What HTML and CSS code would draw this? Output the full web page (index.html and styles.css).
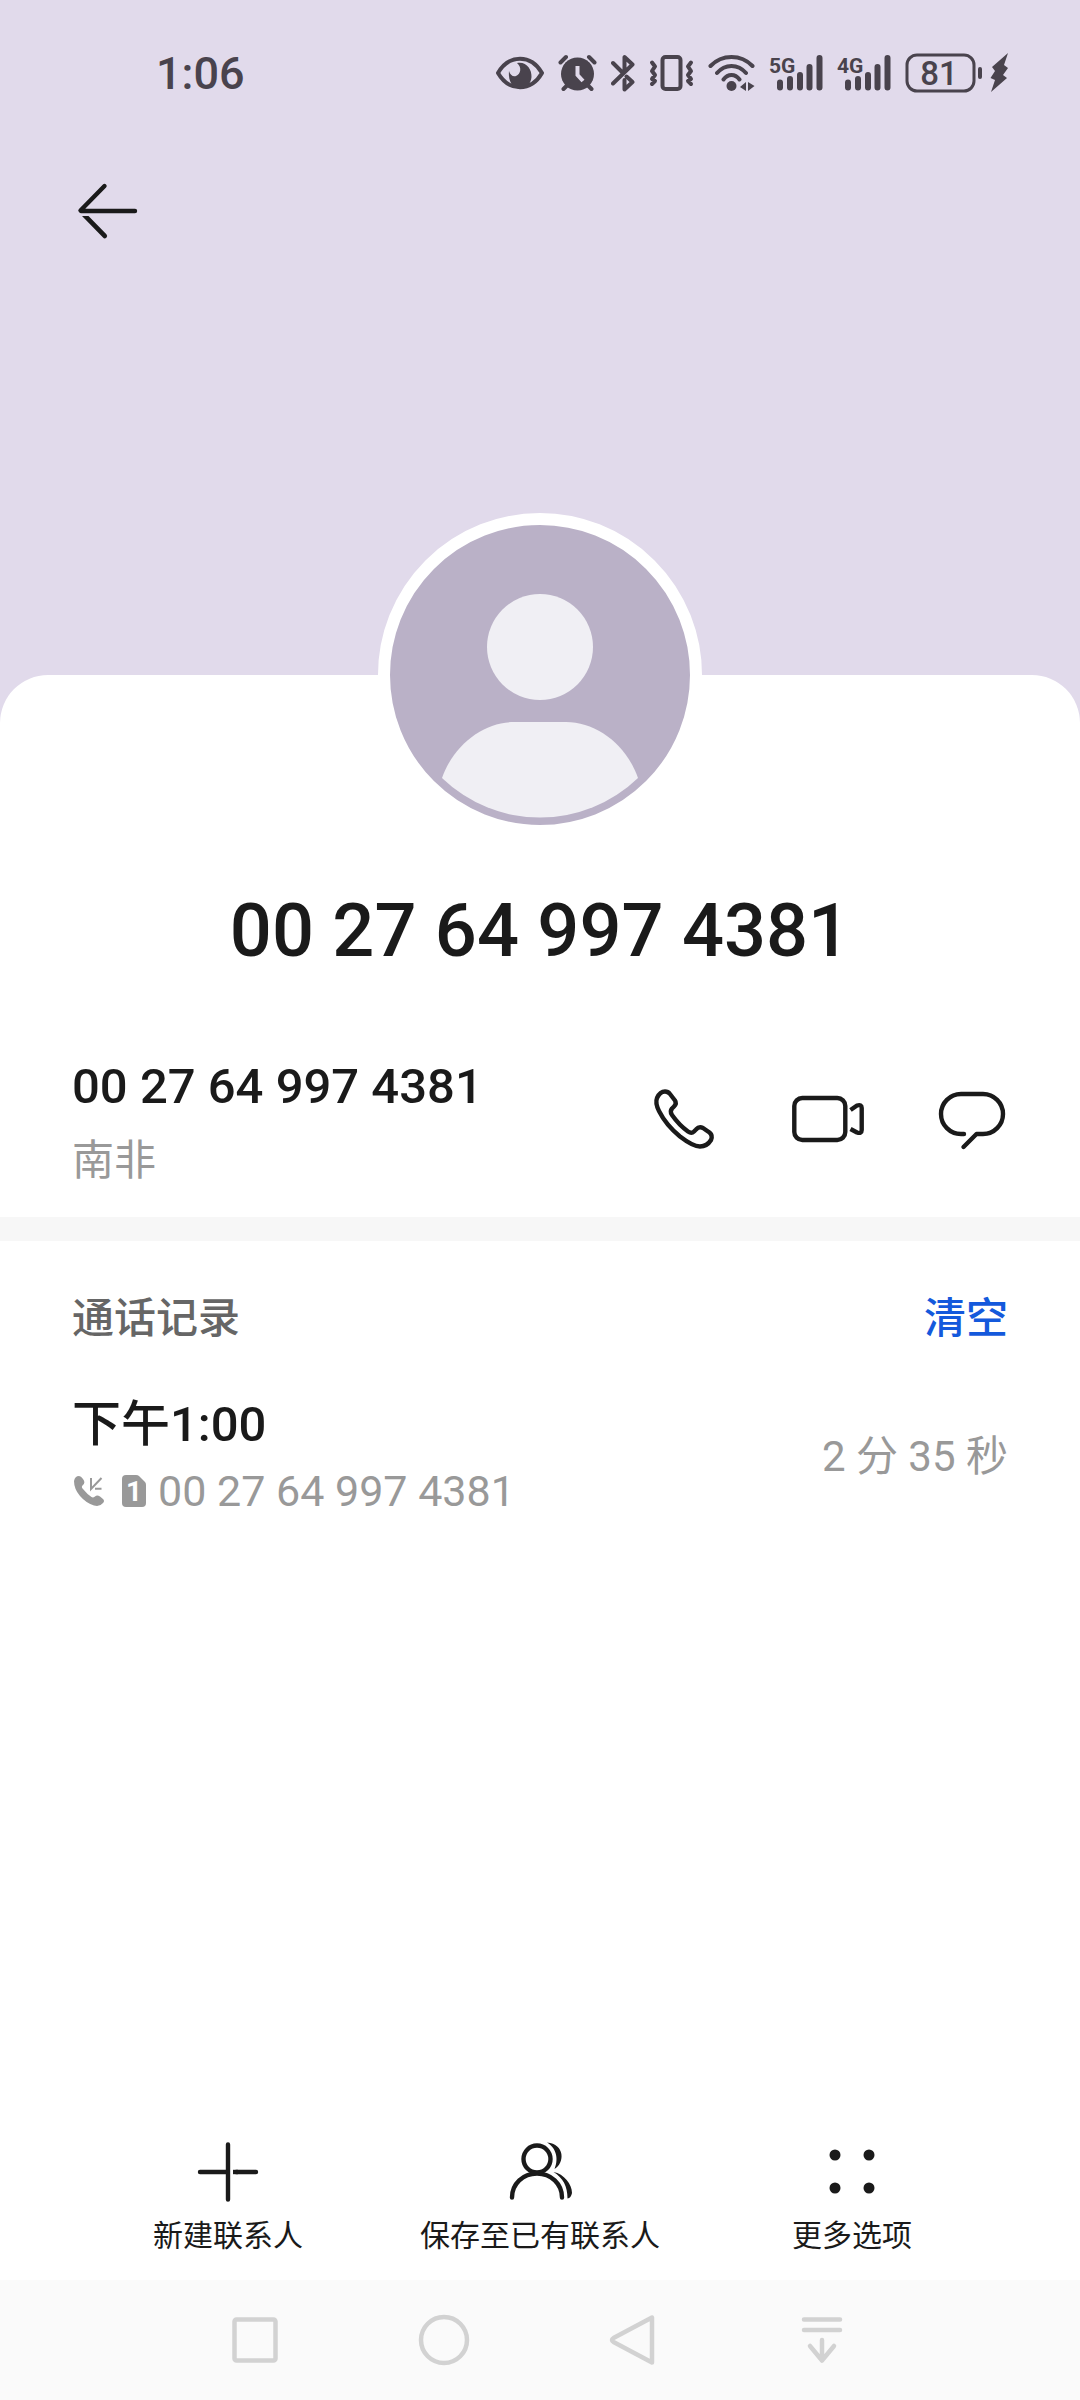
FILE: index.html
```html
<!DOCTYPE html>
<html lang="zh-CN">
<head>
    <meta charset="UTF-8">
    <meta name="viewport" content="width=device-width, initial-scale=1.0">
    <title>联系人详情</title>
    <link rel="stylesheet" href="styles.css">
</head>
<body>
    <header class="hero">
        <div class="status-bar">
            <span class="clock">1:06</span>
            <div class="status-icons">
                <!-- eye comfort -->
                <svg width="48" height="40" viewBox="0 0 48 40">
                    <path class="status-line" d="M2 20C13 1 35 1 46 20C35 39 13 39 2 20Z"/>
                    <path class="status-fill" d="M21 10C30 8 36 16 35.5 24C35 31 30 35.5 24 35.5C17 35.5 12 29 13 18C14 22 17 24 20 23C25 21 26 14 21 10Z"/>
                </svg>
                <!-- alarm -->
                <svg width="39" height="40" viewBox="0 0 39 40">
                    <circle class="status-fill" cx="19.5" cy="21" r="16.5"/>
                    <path class="status-line" d="M2.5 9.5L8 4M31 4L36.5 9.5M5.5 36L10 31.5M33.5 36L29 31.5"/>
                    <path class="status-cut" d="M19.5 13V22L25 28"/>
                </svg>
                <!-- bluetooth -->
                <svg width="24" height="40" viewBox="0 0 24 40">
                    <path class="status-line" d="M2 10L11 19M2 30.5L21.5 11.5L13.5 4V18M13.5 27V36.5L21.5 29L15.5 23.5"/>
                </svg>
                <!-- vibrate -->
                <svg width="45" height="40" viewBox="0 0 45 40">
                    <rect class="status-line" x="13.5" y="4" width="18" height="32" rx="3"/>
                    <path class="status-line" d="M3 9.5L6 13.5L3 18L6 22L3 26L6 28L3 31M42 9.5L39 13.5L42 18L39 22L42 26L39 28L42 31"/>
                </svg>
                <!-- wifi -->
                <svg width="47" height="40" viewBox="0 0 47 40">
                    <path class="status-line" d="M2.5 13C14 1 33 1 44.5 13M9 20C17 10.5 30 10.5 38 20M15.5 26.5C20 20.5 27 20.5 31.5 26.5"/>
                    <circle class="status-fill" cx="23.5" cy="33" r="5"/>
                    <path class="status-fill" d="M32 34L38 29V38ZM40 29L46.5 33L40 38Z"/>
                </svg>
                <!-- mobile signal -->
                <svg width="54" height="40" viewBox="0 0 54 40">
                    <path class="signal" d="M11 29.5V34.5M21 26V34.5M31 22V34.5M40.5 14V34.5M50.5 5V34.5"/>
                    <text class="net" x="0" y="20">5G</text>
                </svg>
                <svg width="54" height="40" viewBox="0 0 54 40">
                    <path class="signal" d="M11 29.5V34.5M21 26V34.5M31 22V34.5M40.5 14V34.5M50.5 5V34.5"/>
                    <text class="net" x="0" y="20">4G</text>
                </svg>
                <!-- battery -->
                <svg width="103" height="40" viewBox="0 0 103 40">
                    <rect class="battery" x="2" y="2" width="67" height="36" rx="10"/>
                    <rect class="status-fill" x="73" y="14" width="4" height="12" rx="2"/>
                    <text class="level" x="34" y="32">81</text>
                    <path class="status-fill" d="M103 0L87 14L90 18L85.5 25L90 27L86 39L102 25L98 22L103 15L99 12Z"/>
                </svg>
            </div>
        </div>
        <button class="icon-button back" aria-label="返回">
            <svg width="72" height="72" viewBox="0 0 72 72">
                <path class="line" d="M32.5 11L8.5 35.5L9 36H63"/>
                <path class="solid" d="M10 41H16.5L34.4 59.3A2.3 2.3 0 0 1 31 62.6Z"/>
            </svg>
        </button>
    </header>

    <main class="card">
        <svg class="avatar" viewBox="0 0 300 300">
            <circle cx="150" cy="122" r="53"/>
            <path d="M52 253C64 219 94 197 124 197H176C206 197 236 219 248 253A141 141 0 0 1 52 253Z"/>
        </svg>
        <h1 class="name">00 27 64 997 4381</h1>

        <section class="phone-row">
            <div>
                <div class="phone">00 27 64 997 4381</div>
                <div class="region">南非</div>
            </div>
            <div class="phone-actions">
                <button class="icon-button" aria-label="拨打电话">
                    <svg width="72" height="72" viewBox="0 0 72 72">
                        <path class="line" d="M17 8.5Q20 8.5 22 11L27 17.5Q29 20.5 26 23.5L24 25.5Q21.5 28.5 24 32Q31 42 40 48.5Q43.5 51 46 48.5L48 46.5Q51 43 55 45L61.5 49.5Q65 52.5 63 57Q59 63.5 52 63.5Q45 63.5 32 53.5Q18 42 11 28Q7 20 9 15Q12 8.5 17 8.5Z"/>
                    </svg>
                </button>
                <button class="icon-button" aria-label="视频通话">
                    <svg width="72" height="72" viewBox="0 0 72 72">
                        <rect class="line" x="2.3" y="15" width="51" height="42" rx="8"/>
                        <path class="line butt" d="M58.5 27L65 22.5Q69.7 21 69.7 25V47Q69.7 51 65 49.5L58.5 46"/>
                    </svg>
                </button>
                <button class="icon-button" aria-label="发送信息">
                    <svg width="72" height="72" viewBox="0 0 72 72">
                        <path class="line" d="M28 51H25A20 20 0 0 1 25 11H47A20 20 0 0 1 47 51H40.5L27.5 64"/>
                    </svg>
                </button>
            </div>
        </section>

        <section class="log">
            <div class="log-head">
                <h2 class="log-title">通话记录</h2>
                <button class="clear">清空</button>
            </div>
            <div class="log-item">
                <div>
                    <div class="time">下午1:00</div>
                    <div class="log-number">
                        <svg width="30" height="36" viewBox="0 0 30 36">
                            <path class="muted" d="M0 8Q1 3 5 3Q7 3 9 6Q12 10 8.5 12.5Q7 14 9 16Q13 21 17.5 24Q19 25 21 23.5Q23 21.5 26 23.5L29 26Q31 28 29 30Q26 34 20 32.5Q12 30 6 23Q0 16 0 8Z"/>
                            <path class="muted-line" d="M17 5V16L27.5 5M21 15.7H27.5"/>
                        </svg>
                        <svg width="24" height="32" viewBox="0 0 24 32">
                            <path class="muted" d="M4 0H14Q16 0 17 1L23 7Q24 8 24 10V28Q24 32 20 32H4Q0 32 0 28V4Q0 0 4 0Z"/>
                            <text class="sim" x="12" y="26">1</text>
                        </svg>
                        <span>00 27 64 997 4381</span>
                    </div>
                </div>
                <div class="duration">2 分 35 秒</div>
            </div>
        </section>
    </main>

    <div class="actions">
        <button class="action">
            <svg width="72" height="72" viewBox="0 0 72 72">
                <path class="line" d="M36 8.5V63.5M8 36H36M44 36H64"/>
                <path class="line butt" d="M41 36H46"/>
            </svg>
            新建联系人
        </button>
        <button class="action">
            <svg width="72" height="72" viewBox="0 0 72 72">
                <circle class="line" cx="33" cy="23" r="13.5"/>
                <path class="line" d="M8 61.5C8 48 19 37.5 33 37.5S58 48 58 61.5"/>
                <path class="solid" d="M43 6.5C61 8 61 27 50.5 33C54 25 54 13 43 6.5ZM49.5 36C60 38 68 48 68 57Q67 62 63.5 62.5C63.5 50 59 42 49.5 36Z"/>
            </svg>
            保存至已有联系人
        </button>
        <button class="action">
            <svg width="72" height="72" viewBox="0 0 72 72">
                <g class="solid">
                    <circle cx="19" cy="19" r="5.5"/>
                    <circle cx="53" cy="19" r="5.5"/>
                    <circle cx="19" cy="52" r="5.5"/>
                    <circle cx="53" cy="52" r="5.5"/>
                </g>
            </svg>
            更多选项
        </button>
    </div>

    <nav class="nav-bar">
        <button class="icon-button" aria-label="最近任务">
            <svg width="60" height="60" viewBox="0 0 60 60"><rect x="9.5" y="9.5" width="41" height="41" rx="2"/></svg>
        </button>
        <button class="icon-button" aria-label="主页">
            <svg width="60" height="60" viewBox="0 0 60 60"><circle cx="30" cy="30" r="23"/></svg>
        </button>
        <button class="icon-button" aria-label="返回上一页">
            <svg width="60" height="60" viewBox="0 0 60 60"><path d="M49 7.5V52.5L10.5 32Q7.5 30 10.5 28Z"/></svg>
        </button>
        <button class="icon-button" aria-label="通知栏">
            <svg width="60" height="60" viewBox="0 0 60 60"><path d="M12 9.5H48M12 20H48M30 30V50M18 36L30 50.5L42 36"/></svg>
        </button>
    </nav>
</body>
</html>
```
FILE: styles.css
```css
* {
    box-sizing: border-box;
}
body {
    margin: 0;
    min-height: 100vh;
    display: flex;
    flex-direction: column;
    background-color: #e1daeb;
    color: #1a1a1a;
    font-family: Roboto, "Noto Sans CJK SC", sans-serif;
}
button {
    border: 0;
    padding: 0;
    background: none;
    color: inherit;
    font-family: inherit;
    cursor: pointer;
}
svg {
    display: block;
    flex: none;
}
h1, h2 {
    margin: 0;
}

/* header */
.hero {
    height: 675px;
    padding: 0 72px;
}
.status-bar {
    height: 146px;
    padding-left: 84px;
    display: flex;
    align-items: center;
    justify-content: space-between;
    color: #49434d;
}
.clock {
    font-size: 45px;
    font-weight: 500;
}
.status-icons {
    display: flex;
    gap: 14px;
}
.status-fill,
.net,
.level {
    fill: #49434d;
}
.status-line,
.signal,
.battery {
    fill: none;
    stroke: #49434d;
    stroke-width: 4;
    stroke-linecap: round;
    stroke-linejoin: round;
}
.status-cut {
    fill: none;
    stroke: #e1daeb;
    stroke-width: 4;
}
.signal {
    stroke-width: 6;
}
.battery {
    stroke-width: 3;
}
.net {
    font-size: 21px;
    font-weight: 700;
}
.level {
    font-size: 33px;
    font-weight: 500;
    text-anchor: middle;
}
.icon-button {
    display: block;
}
.back {
    margin-top: 29px;
}
.line {
    fill: none;
    stroke: #1a1a1a;
    stroke-width: 4.4;
    stroke-linecap: round;
    stroke-linejoin: round;
}
.butt {
    stroke-linecap: butt;
}
.solid {
    fill: #1a1a1a;
}

/* contact card */
.card {
    flex: 1;
    background-color: #fff;
    border-radius: 48px 48px 0 0;
}
.avatar {
    width: 324px;
    height: 324px;
    margin: -162px auto 0;
    border: 12px solid #fff;
    border-radius: 50%;
    background-color: #bab1c7;
    fill: #f0eff4;
}
.name {
    margin-top: 50px;
    font-size: 74px;
    font-weight: 500;
    line-height: 88px;
    text-align: center;
}
.phone-row {
    display: flex;
    align-items: center;
    justify-content: space-between;
    padding: 80px 72px 24px;
    border-bottom: 24px solid #f7f7f7;
}
.phone {
    font-size: 49px;
    font-weight: 500;
    line-height: 64px;
}
.region {
    margin-top: 10px;
    font-size: 42px;
    line-height: 64px;
    color: #999;
}
.phone-actions {
    display: flex;
    gap: 72px;
    padding-bottom: 10px;
}

/* call log */
.log {
    padding: 46px 72px;
}
.log-head,
.log-item {
    display: flex;
    align-items: center;
    justify-content: space-between;
}
.log-title,
.clear {
    font-size: 42px;
    font-weight: 500;
    line-height: 64px;
}
.log-title {
    color: #666;
}
.clear {
    color: #1459dc;
}
.log-item {
    margin-top: 42px;
}
.time {
    font-size: 49px;
    font-weight: 500;
    line-height: 64px;
}
.log-number {
    display: flex;
    align-items: center;
    padding-left: 2px;
    font-size: 43px;
    line-height: 68px;
    color: #999;
}
.log-number svg + svg {
    margin: 0 12px 0 18px;
}
.duration {
    padding-bottom: 14px;
    font-size: 42px;
    color: #999;
}
.muted {
    fill: #999;
}
.muted-line {
    fill: none;
    stroke: #999;
    stroke-width: 2;
}
.sim {
    fill: #fff;
    font-size: 28px;
    font-weight: 700;
    text-anchor: middle;
}

/* bottom actions */
.actions {
    display: grid;
    grid-template-columns: repeat(3, 1fr);
    padding: 0 72px 24px;
    background-color: #fff;
}
.action {
    display: flex;
    flex-direction: column;
    align-items: center;
    gap: 8px;
    font-size: 30px;
    line-height: 40px;
    white-space: nowrap;
}
.nav-bar {
    display: grid;
    grid-template-columns: repeat(4, 1fr);
    place-items: center;
    height: 120px;
    padding: 0 164px 0 160px;
    background-color: #fafafa;
}
.nav-bar svg {
    fill: none;
    stroke: #d2d2d2;
    stroke-width: 4.5;
    stroke-linecap: round;
    stroke-linejoin: round;
}
```
